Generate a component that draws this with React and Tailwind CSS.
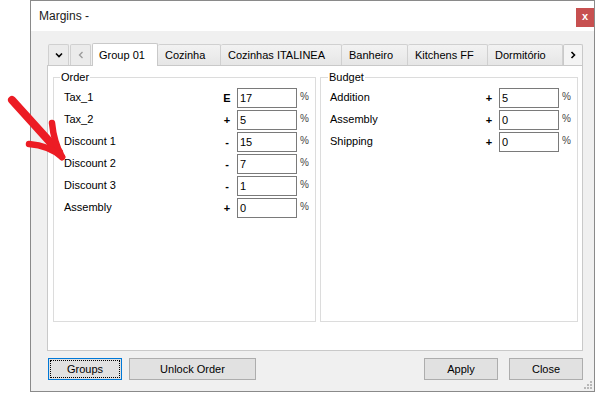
import React from 'react';

const orderRows = [
  { label: 'Tax_1', sign: 'E', value: '17' },
  { label: 'Tax_2', sign: '+', value: '5' },
  { label: 'Discount 1', sign: '-', value: '15' },
  { label: 'Discount 2', sign: '-', value: '7' },
  { label: 'Discount 3', sign: '-', value: '1' },
  { label: 'Assembly', sign: '+', value: '0' },
];

const budgetRows = [
  { label: 'Addition', sign: '+', value: '5' },
  { label: 'Assembly', sign: '+', value: '0' },
  { label: 'Shipping', sign: '+', value: '0' },
];

const tabs = [
  { name: 'Group 01', w: 'w-[66px]', active: true },
  { name: 'Cozinha', w: 'w-[63px]' },
  { name: 'Cozinhas ITALINEA', w: 'w-[121px]' },
  { name: 'Banheiro', w: 'w-[66px]' },
  { name: 'Kitchens FF', w: 'w-[80px]' },
  { name: 'Dormitório', w: 'w-[75px]' },
];

function Row({ row, labelW }) {
  return (
    <div className="flex items-center h-[20px]">
      <span className={`${labelW} leading-[13px] -mt-[1px]`}>{row.label}</span>
      <span className="w-[14px] text-center font-bold leading-[13px]">{row.sign}</span>
      <div className="ml-[3px] w-[60px] h-[20px] border border-[#7a7a7a] bg-white pl-[2px] flex items-center leading-[13px]">
        {row.value}
      </div>
      <span className="ml-[3px] text-[10px] leading-[10px] -mt-[3px] text-[#444]">%</span>
    </div>
  );
}

function TabBtn({ children }) {
  return (
    <div className="w-[21px] h-[21px] border border-b-0 border-[#d0d0d0] rounded-t-[2px] bg-[#ebebeb] flex items-center justify-center">
      {children}
    </div>
  );
}

export default function App() {
  return (
    <div className="relative w-[596px] h-[393px] bg-white font-['Liberation_Sans',Arial,sans-serif] text-[11px] text-black overflow-hidden">
      {/* window */}
      <div className="relative ml-[30px] w-[565px] h-[392px] border border-[#8a8a8a] bg-[#f0f0f0] flex flex-col">
        {/* title bar */}
        <div className="h-[30px] bg-white flex items-start justify-between">
          <span className="ml-[8px] mt-[8px] text-[12px] leading-[15px] text-[#1a1a1a]">Margins -</span>
          <div className="mt-[7px] w-[18px] h-[19px] bg-[#c75050] flex items-center justify-center text-white font-bold text-[11px] leading-none pb-[2px]">
            x
          </div>
        </div>

        {/* body */}
        <div className="flex-1 pl-[16px] pr-[11px] pt-[12px] flex flex-col">
          {/* tab strip */}
          <div className="flex items-end h-[22px] pl-[1px]">
            <TabBtn>
              <svg width="8" height="6" viewBox="0 0 8 6">
                <path d="M1 1.5 L4 4.5 L7 1.5" fill="none" stroke="#000" strokeWidth="1.6" />
              </svg>
            </TabBtn>
            <div className="ml-[1px]">
              <TabBtn>
                <svg width="6" height="8" viewBox="0 0 6 8">
                  <path d="M4.5 1 L1.5 4 L4.5 7" fill="none" stroke="#9a9a9a" strokeWidth="1.3" />
                </svg>
              </TabBtn>
            </div>
            <div className="ml-[1px] flex items-end">
              {tabs.map((t) =>
                t.active ? (
                  <div
                    key={t.name}
                    className={`${t.w} relative z-10 h-[23px] -mb-[1px] bg-white border border-b-0 border-[#c9c9c9] rounded-t-[2px] pl-[6px] flex items-center leading-[13px]`}
                  >
                    {t.name}
                  </div>
                ) : (
                  <div
                    key={t.name}
                    className={`${t.w} h-[21px] bg-gradient-to-b from-[#f2f2f2] to-[#e6e6e6] border border-l-0 border-b-0 border-[#d0d0d0] rounded-t-[2px] pl-[7px] flex items-center leading-[13px]`}
                  >
                    {t.name}
                  </div>
                )
              )}
            </div>
            <div className="w-[20px] h-[21px] border border-b-0 border-[#c9c9c9] rounded-t-[2px] bg-[#f4f4f4] flex items-center justify-center">
              <svg width="6" height="8" viewBox="0 0 6 8">
                <path d="M1.5 1 L4.5 4 L1.5 7" fill="none" stroke="#000" strokeWidth="1.6" />
              </svg>
            </div>
          </div>

          {/* tab page */}
          <div className="h-[286px] border border-[#c9c9c9] bg-white pl-[5px] pr-[4px] pt-[5px] flex gap-[4px]">
            <fieldset className="w-[263px] h-[251px] border border-[#dcdcdc] m-0 p-0">
              <legend className="ml-[6px] px-[1px] leading-[13px]">Order</legend>
              <div className="mt-[4px] pl-[10px] flex flex-col gap-[2px]">
                {orderRows.map((r) => (
                  <Row key={r.label} row={r} labelW="w-[156px]" />
                ))}
              </div>
            </fieldset>
            <fieldset className="w-[258px] h-[251px] border border-[#dcdcdc] m-0 p-0">
              <legend className="ml-[7px] px-[1px] leading-[13px]">Budget</legend>
              <div className="mt-[4px] pl-[9px] flex flex-col gap-[2px]">
                {budgetRows.map((r) => (
                  <Row key={r.label} row={r} labelW="w-[152px]" />
                ))}
              </div>
            </fieldset>
          </div>

          {/* buttons */}
          <div className="mt-[7px] flex items-center pl-[1px]">
            <button className="w-[74px] h-[22px] bg-[#e1e1e1] border border-[#0078d7] outline-1 outline-dotted outline-black -outline-offset-3 leading-[13px]">
              Groups
            </button>
            <button className="ml-[7px] w-[127px] h-[22px] bg-[#e1e1e1] border border-[#adadad] leading-[13px]">
              Unlock Order
            </button>
            <div className="flex-1" />
            <button className="w-[74px] h-[22px] bg-[#e1e1e1] border border-[#adadad] leading-[13px]">
              Apply
            </button>
            <button className="ml-[11px] w-[74px] h-[22px] bg-[#e1e1e1] border border-[#adadad] leading-[13px]">
              Close
            </button>
          </div>
        </div>

        {/* resize grip */}
        <svg className="absolute right-[1px] bottom-[1px]" width="9" height="9" viewBox="0 0 9 9">
          <rect x="6" y="0" width="2" height="2" fill="#b8b8b8" />
          <rect x="3" y="3" width="2" height="2" fill="#b8b8b8" />
          <rect x="6" y="3" width="2" height="2" fill="#b8b8b8" />
          <rect x="0" y="6" width="2" height="2" fill="#b8b8b8" />
          <rect x="3" y="6" width="2" height="2" fill="#b8b8b8" />
          <rect x="6" y="6" width="2" height="2" fill="#b8b8b8" />
        </svg>
      </div>

      {/* red annotation arrow */}
      <svg className="absolute left-0 top-0" width="80" height="170" viewBox="0 0 80 170">
        <g fill="none" stroke="#ec1c24" strokeLinecap="round" strokeLinejoin="round">
          <path d="M12 100 L59 152" strokeWidth="8" />
          <path d="M52 123 C53 134 56 146 62 157" strokeWidth="6.5" />
          <path d="M29 144 C42 145 53 149 62 157" strokeWidth="6.5" />
        </g>
      </svg>
    </div>
  );
}
